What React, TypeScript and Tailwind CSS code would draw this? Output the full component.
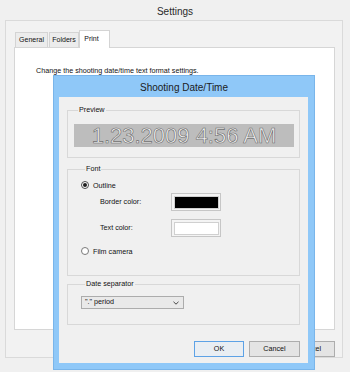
import React from "react";

const ui = "font-['Liberation_Sans',Arial,sans-serif]";

const Radio = ({ checked, label }: { checked?: boolean; label: string }) => (
  <div className="flex h-[10px] items-center">
    <span
      className={
        "flex h-[8px] w-[8px] items-center justify-center rounded-full border bg-white " +
        (checked ? "border-[#4a4a4a]" : "border-[#7a7a7a]")
      }
    >
      {checked && <span className="h-[4px] w-[4px] rounded-full bg-[#1e1e1e]" />}
    </span>
    <span className="ml-[4px] text-[7.2px] leading-[9px] text-[#111]">{label}</span>
  </div>
);

const Swatch = ({ color }: { color: string }) => (
  <div className="flex h-[18px] w-[50px] border-[1.5px] border-[#c6c6c6] bg-[#f4f4f4] p-[1.5px]">
    <div className={"flex-1 border border-[#d0d0d0] " + color} />
  </div>
);

const Group = ({ title, className, children }: { title: string; className: string; children: React.ReactNode }) => (
  <fieldset className={"border border-[#d8d8d8] " + className}>
    <legend className="ml-[4px] px-[1px] text-[7.2px] leading-[8px] text-[#111]">{title}</legend>
    {children}
  </fieldset>
);

const Button = ({ label, focused, className }: { label: string; focused?: boolean; className?: string }) => (
  <div
    className={
      "flex h-[16px] items-center justify-center border text-[7.2px] text-[#111] " +
      (focused ? "border-[#5da2e6] bg-[#e9eef3]" : "border-[#adadad] bg-[#e4e4e4]") +
      " " +
      (className ?? "")
    }
  >
    {label}
  </div>
);

export default function App() {
  return (
    <div className={"relative h-[372px] w-[350px] overflow-hidden bg-[#f0f0f0] " + ui}>
      {/* Settings window */}
      <div className="flex h-[20px] items-center justify-center pt-[2px] text-[10px] text-[#2a2a2a]">Settings</div>
      <div className="mx-[5px] flex h-[338px] w-[338px] flex-col border border-[#dadada] bg-[#f2f2f2] pl-[8px] pt-[9px]">
        <div className="relative z-10 flex h-[17px] items-end pl-[1px]">
          <div className="flex h-[15px] w-[33px] items-center justify-center border border-b-0 border-[#d4d4d4] bg-[#ececec] text-[7px] text-[#111]">
            General
          </div>
          <div className="ml-[1px] flex h-[15px] w-[30px] items-center justify-center border border-b-0 border-[#d4d4d4] bg-[#ececec] text-[7px] text-[#111]">
            Folders
          </div>
          <div className="-mb-px flex h-[18px] w-[31px] items-start justify-center border border-b-0 border-[#d4d4d4] bg-white pt-[3px] pr-[6px] text-[7px] text-[#111]">
            Print
          </div>
        </div>
        <div className="h-[283px] w-[321px] border border-[#d6d6d6] bg-white pl-[21px] pt-[18px]">
          <div className="text-[7.2px] leading-[9px] text-[#111]">Change the shooting date/time text format settings.</div>
        </div>
        <div className="mt-[11px] flex w-[321px] justify-end gap-[5px]">
          <Button label="OK" className="w-[50px]" />
          <Button label="Cancel" className="w-[50px]" />
        </div>
      </div>

      {/* Shooting Date/Time dialog */}
      <div className="absolute left-[53px] top-[75px] flex h-[295px] w-[262px] flex-col border border-[#79b5ea] bg-[#8fc8f8]">
        <div className="flex h-[21px] items-center justify-center pt-[1px] text-[10px] text-[#1c1c1c]">Shooting Date/Time</div>
        <div className="ml-[5px] flex h-[266px] w-[249px] flex-col bg-[#f0f0f0] px-[8px] pt-[9px]">
          <Group title="Preview" className="pb-[10px] pl-[6px] pr-[5px] pt-[10px]">
            <div className="flex h-[23px] items-center justify-center bg-[#bdbdbd] pt-[1px] text-[22px] leading-none text-[#f2f2f2] [-webkit-text-stroke:0.6px_#6a6a6a]">
              1.23.2009 4:56 AM
            </div>
          </Group>

          <Group title="Font" className="mt-[7px] pb-[19px] pl-[13px] pt-[7px]">
            <Radio checked label="Outline" />
            <div className="mt-[3px] flex items-center">
              <span className="w-[90px] pl-[19px] text-[7.2px] text-[#111]">Border color:</span>
              <Swatch color="bg-black" />
            </div>
            <div className="mt-[8px] flex items-center">
              <span className="w-[90px] pl-[19px] text-[7.2px] text-[#111]">Text color:</span>
              <Swatch color="bg-white" />
            </div>
            <div className="mt-[9px]">
              <Radio label="Film camera" />
            </div>
          </Group>

          <Group title="Date separator" className="mt-[4px] pb-[15px] pl-[13px] pt-[8px]">
            <div className="flex h-[13px] w-[103px] items-center justify-between border border-[#acacac] bg-[#e9e9e9] pl-[3px] pr-[4px] text-[7.2px] text-[#111]">
              <span>"." period</span>
              <svg width="6" height="4" viewBox="0 0 6 4">
                <path d="M0.5 0.8 L3 3.2 L5.5 0.8" fill="none" stroke="#444" strokeWidth="1" />
              </svg>
            </div>
          </Group>

          <div className="mt-[16px] flex justify-end gap-[5px]">
            <Button label="OK" focused className="w-[50px]" />
            <Button label="Cancel" className="w-[51px]" />
          </div>
        </div>
      </div>
    </div>
  );
}
